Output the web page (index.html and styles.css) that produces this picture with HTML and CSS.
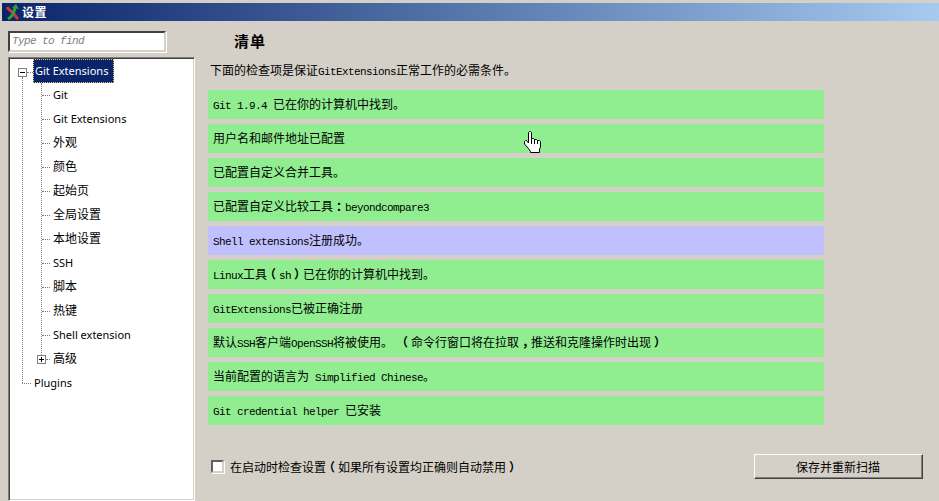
FILE: index.html
```html
<!DOCTYPE html>
<html lang="zh-CN">
<head>
<meta charset="utf-8">
<title>设置</title>
<link rel="stylesheet" href="styles.css">
</head>
<body>
<div class="window">
  <header class="titlebar">
    <svg class="logo" width="14" height="17" viewBox="0 0 14 17">
      <path d="M1 3 C3 6 5 7 7 9 C9 11 10 13 12 15" stroke="#d8342c" stroke-width="3" fill="none"/>
      <path d="M2 15 C6 13 8 9 9 4" stroke="#2fa03c" stroke-width="3" fill="none"/>
      <path d="M6 4 L10 0 L13 5 Z" fill="#2fa03c"/>
    </svg>
    <span class="title-text">设置</span>
  </header>
  <div class="main">
    <aside class="side">
      <div class="search"><span class="search-hint">Type to find</span></div>
      <nav class="tree">
        <div class="root-group">
          <div class="node root-node">
            <svg class="box" width="9" height="9" viewBox="0 0 9 9"><rect x=".5" y=".5" width="8" height="8" fill="#fff" stroke="#808080"/><path d="M2 4.5H7" stroke="#000"/></svg>
            <span class="node-sel">Git Extensions</span>
          </div>
          <div class="kids">
            <div class="node child">Git</div>
            <div class="node child">Git Extensions</div>
            <div class="node child cjk">外观</div>
            <div class="node child cjk">颜色</div>
            <div class="node child cjk">起始页</div>
            <div class="node child cjk">全局设置</div>
            <div class="node child cjk">本地设置</div>
            <div class="node child">SSH</div>
            <div class="node child cjk">脚本</div>
            <div class="node child cjk">热键</div>
            <div class="node child">Shell extension</div>
            <div class="node child cjk expand">
              <svg class="box" width="9" height="9" viewBox="0 0 9 9"><rect x=".5" y=".5" width="8" height="8" fill="#fff" stroke="#808080"/><path d="M2 4.5H7M4.5 2V7" stroke="#000"/></svg>
              高级
            </div>
          </div>
          <div class="node top">Plugins</div>
        </div>
      </nav>
    </aside>
    <main class="content">
      <h1 class="heading">清单</h1>
      <p class="intro">下面的检查项是保证<span class="lat">GitExtensions</span>正常工作的必需条件。</p>
      <div class="checks">
        <div class="check"><span class="lat">Git 1.9.4 </span>已在你的计算机中找到。</div>
        <div class="check">用户名和邮件地址已配置</div>
        <div class="check">已配置自定义合并工具。</div>
        <div class="check">已配置自定义比较工具<span class="mid">：</span><span class="lat">beyondcompare3</span></div>
        <div class="check info"><span class="lat">Shell extensions</span>注册成功。</div>
        <div class="check"><span class="lat">Linux</span>工具<span class="mid">（</span><span class="lat">sh</span><span class="mid">）</span>已在你的计算机中找到。</div>
        <div class="check"><span class="lat">GitExtensions</span>已被正确注册</div>
        <div class="check">默认<span class="lat">SSH</span>客户端<span class="lat">OpenSSH</span>将被使用。<span class="lat">&nbsp;</span><span class="mid">（</span>命令行窗口将在拉取<span class="mid">，</span>推送和克隆操作时出现<span class="mid">）</span></div>
        <div class="check">当前配置的语言为<span class="lat"> Simplified Chinese</span>。</div>
        <div class="check"><span class="lat">Git credential helper </span>已安装</div>
      </div>
      <div class="footer">
        <label class="startup"><span class="checkbox"></span><span>在启动时检查设置<span class="mid">（</span>如果所有设置均正确则自动禁用<span class="mid">）</span></span></label>
        <button class="rescan" type="button">保存并重新扫描</button>
      </div>
    </main>
  </div>
  <svg class="cursor" width="18" height="23" viewBox="0 0 18 23">
    <path d="M4.5 1.5 L5.5 .5 H6.5 L7.5 1.5 V7.5 H9.5 L10.5 8.5 H12.5 L13.5 9.5 H15.5 L16.5 10.5 V16.5 L15.5 18 V21.5 H6.5 V20.5 L4.5 17.5 L.5 13 V10.5 L1.5 9.5 H2.5 L4.5 12 Z" fill="#fff" stroke="#000"/>
    <path d="M7.5 8V13M10.5 8.5V13M13.5 9.5V13" stroke="#000" fill="none"/>
  </svg>
</div>
</body>
</html>
```
FILE: styles.css
```css
* { box-sizing: border-box; }
html, body { margin: 0; height: 100%; overflow: hidden; }
body {
  background: #d4d0c8;
  color: #000;
  font: 12px/16px "Noto Sans CJK SC", "Noto Sans", sans-serif;
}
.window { position: relative; height: 501px; padding-top: 3px; }
.titlebar {
  display: flex;
  align-items: center;
  gap: 2px;
  height: 18px;
  margin-left: 2px;
  padding-left: 4px;
  background: linear-gradient(90deg, #0a246a, #a6caf0);
  color: #fff;
}
.logo { flex: none; }
.title-text { font-weight: 700; font-size: 12px; letter-spacing: .5px; }
.main { display: flex; height: 480px; }
.side { flex: none; width: 187px; margin-left: 8px; padding-top: 10px; }
.search {
  width: 158px;
  height: 21px;
  padding: 2px 0 0 2px;
  background: #fff;
  border: 2px solid;
  border-color: #404040 #d4d0c8 #d4d0c8 #404040;
  box-shadow: 1px 1px 0 #fff;
  line-height: 12px;
}
.search-hint {
  display: block;
  font: italic 11px/12px "Liberation Mono", monospace;
  letter-spacing: -.6px;
  color: #808080;
}
.tree {
  height: 444px;
  margin-top: 5px;
  background: #fff;
  border: 1px solid;
  border-color: #808080 #fff #fff #808080;
  box-shadow: inset 1px 1px 0 #404040, inset -1px -1px 0 #d4d0c8;
  padding: 1px 0 0 1px;
  font: 11px/24px "Noto Sans", "Noto Sans CJK SC", sans-serif;
}
.root-group { position: relative; }
.root-group::before {
  content: "";
  position: absolute;
  left: 12px;
  top: 18px;
  bottom: 12px;
  border-left: 1px dotted #808080;
}
.node { position: relative; height: 24px; white-space: nowrap; }
.cjk { font-size: 12px; }
.node::before {
  content: "";
  position: absolute;
  top: 12px;
  border-top: 1px dotted #808080;
}
.root-node { padding-left: 23px; }
.root-node::before { left: 17px; width: 6px; top: 13px; }
.root-node .box { position: absolute; left: 8px; top: 9px; }
.node-sel {
  display: inline-block;
  height: 24px;
  padding: 0 5px 0 1px;
  line-height: 22px;
  background: #0a246a;
  color: #fff;
  border: 1px dotted #e8d070;
}
.top { padding-left: 24px; }
.top::before { left: 12px; width: 9px; }
.kids { position: relative; }
.kids::before {
  content: "";
  position: absolute;
  left: 31px;
  top: 0;
  bottom: 12px;
  border-left: 1px dotted #808080;
}
.child { padding-left: 43px; }
.child::before { left: 32px; width: 8px; }
.expand .box { position: absolute; left: 27px; top: 8px; }
.expand::before { left: 36px; width: 4px; }
.content { flex: none; width: 744px; padding-left: 14px; }
.heading {
  margin: 0;
  padding: 11px 0 0 25px;
  font-size: 15px;
  line-height: 18px;
  font-weight: 700;
  height: 37px;
  letter-spacing: 1px;
}
.intro { margin: 0 0 0 1px; height: 24px; line-height: 20px; padding-top: 2px; }
.lat { font: 11px/16px "Liberation Mono", monospace; letter-spacing: -.6px; }
.mid { display: inline-block; width: 12px; text-align: center; font-feature-settings: "halt"; font-weight: 700; }
.checks { display: flex; flex-direction: column; gap: 5px; width: 616px; margin-top: 8px; margin-left: -1px; }
.check {
  height: 29px;
  padding-left: 5px;
  line-height: 28px;
  background: #90ee90;
  white-space: nowrap;
}
.check .lat { line-height: 28px; }
.info { background: #c0c0ff; }
.footer { display: flex; justify-content: space-between; align-items: center; width: 714px; margin-top: 29px; }
.startup { display: flex; align-items: center; margin-left: 2px; gap: 6px; white-space: nowrap; }
.checkbox {
  width: 13px;
  height: 13px;
  background: #fff;
  border: 2px solid;
  border-color: #606060 #d4d0c8 #d4d0c8 #606060;
  box-shadow: 1px 1px 0 #fff;
}
.rescan {
  width: 169px;
  height: 25px;
  padding: 0 1px 0 0;
  background: #d4d0c8;
  color: #000;
  font: inherit;
  border: 1px solid;
  border-color: #fff #404040 #404040 #fff;
  box-shadow: inset -1px -1px 0 #808080;
}
.cursor { position: absolute; left: 524px; top: 131px; }
```
